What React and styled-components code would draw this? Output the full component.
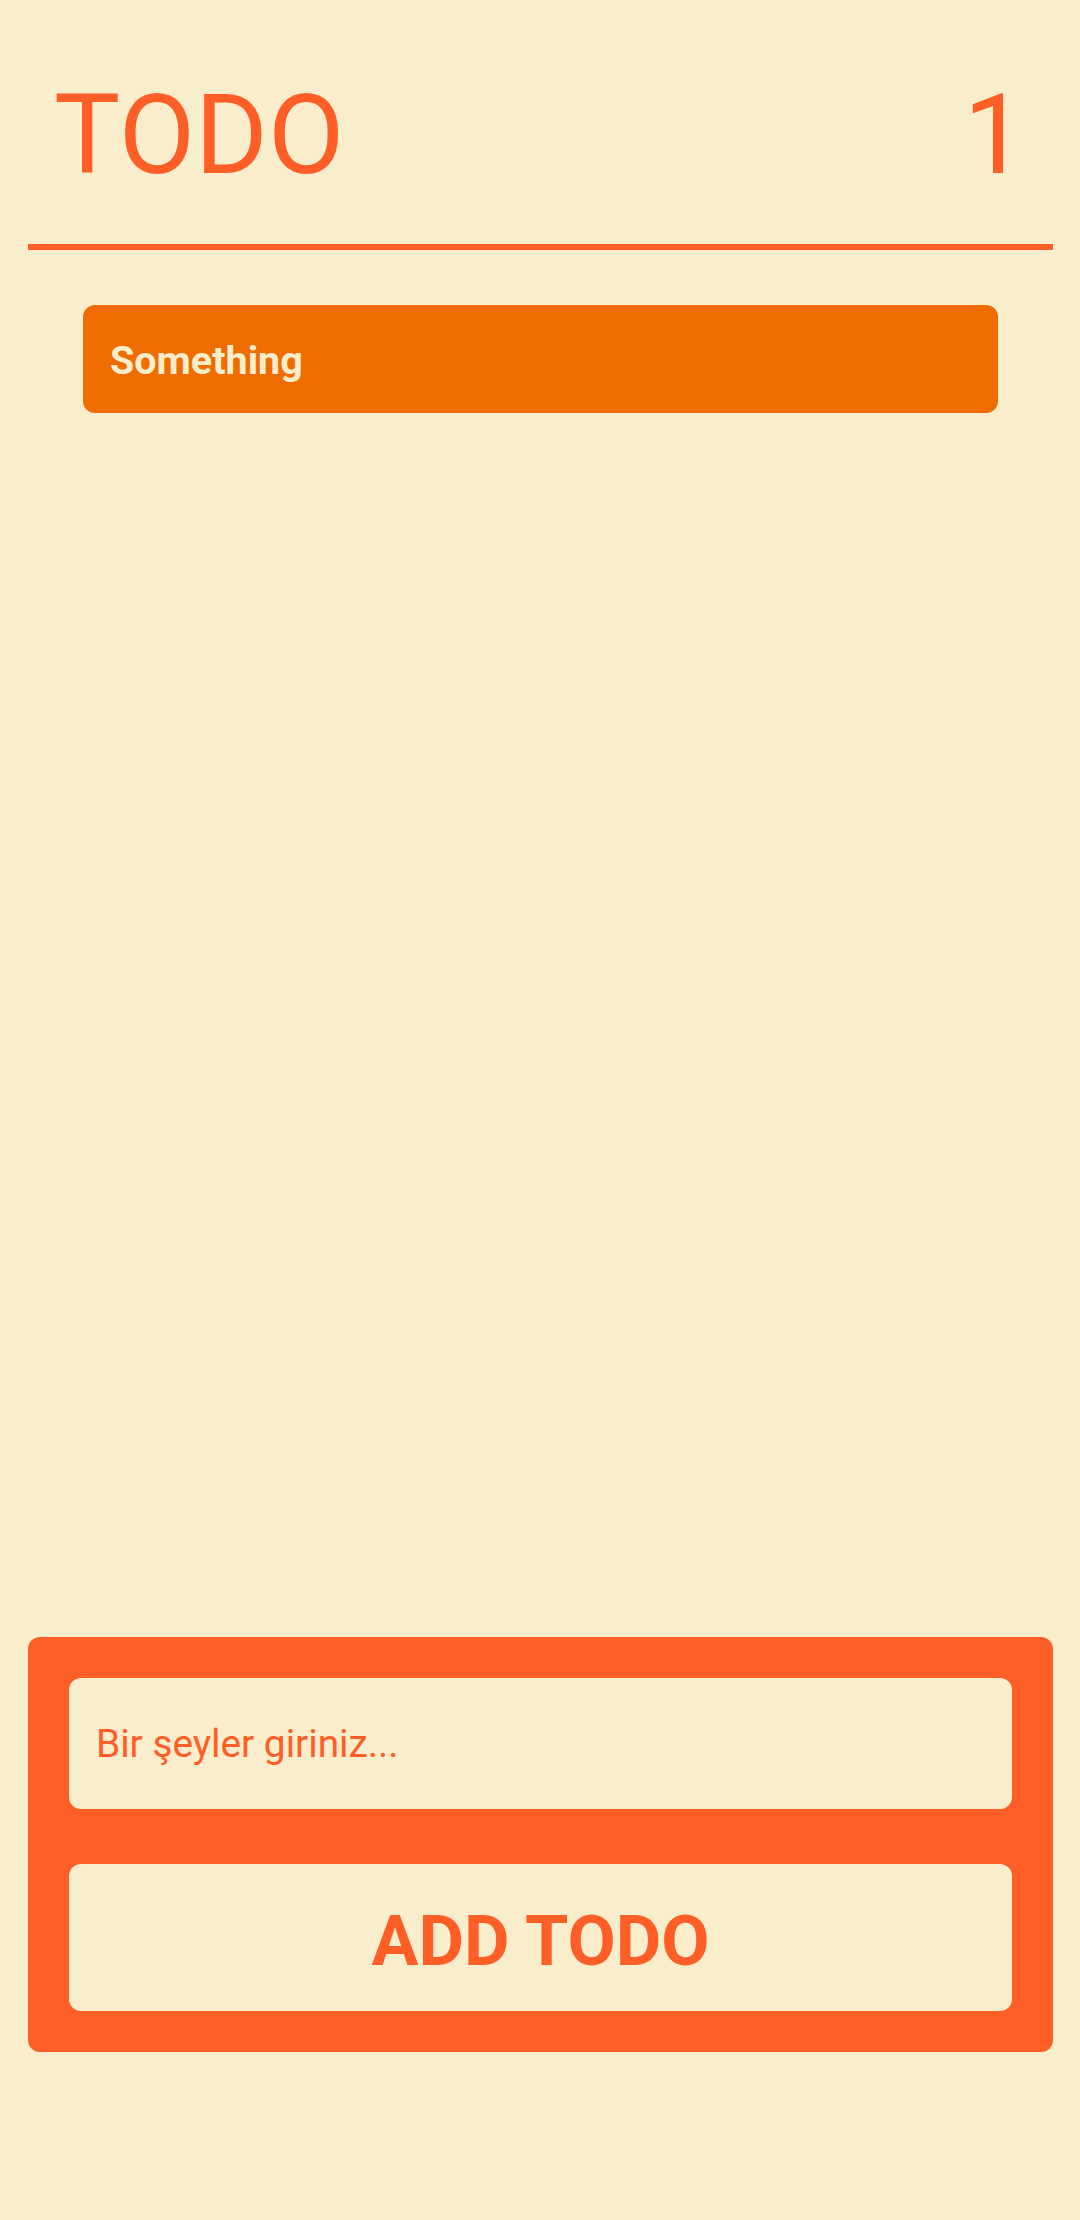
import React from "react";
import styled, { createGlobalStyle } from "styled-components";

const ACCENT = "#FF5E27";
const ITEM = "#EF6C00";
const CREAM = "#FAEDCB";

const Global = createGlobalStyle`
  html, body { margin: 0; padding: 0; background: ${CREAM}; }
  * { box-sizing: border-box; }
  body { font-family: Roboto, "Noto Sans", sans-serif; }
`;

const Page = styled.div`
  min-height: 2220px;
  display: flex;
  flex-direction: column;
  padding: 0 27px 0 28px;
  background: ${CREAM};
`;

const Header = styled.header`
  display: flex;
  justify-content: space-between;
  align-items: flex-start;
  padding: 70px 27px 44px 26px;
  border-bottom: 6px solid ${ACCENT};
`;

const Title = styled.h1`
  margin: 0;
  font-family: Roboto, sans-serif;
  font-weight: 400;
  font-size: 111px;
  line-height: normal;
  color: ${ACCENT};
`;

const List = styled.ul`
  list-style: none;
  margin: 0;
  padding: 55px 55px 0 55px;
  display: flex;
  flex-direction: column;
  gap: 20px;
`;

const Item = styled.li`
  height: 108px;
  border-radius: 12px;
  background: ${ITEM};
  display: flex;
  align-items: center;
  padding: 2px 0 0 27px;
  font-family: Roboto, sans-serif;
  font-weight: 700;
  font-size: 39.5px;
  color: ${CREAM};
`;

const Spacer = styled.div`
  flex: 1;
`;

const Panel = styled.form`
  margin-bottom: 168px;
  padding: 41px;
  border-radius: 12px;
  background: ${ACCENT};
  display: flex;
  flex-direction: column;
  gap: 55px;
`;

const Input = styled.input`
  height: 131px;
  border: none;
  outline: none;
  border-radius: 12px;
  background: ${CREAM};
  padding: 0 27px;
  font-family: Roboto, sans-serif;
  font-size: 38.8px;
  color: ${ACCENT};
  &::placeholder { color: ${ACCENT}; opacity: 1; }
`;

const Button = styled.button`
  height: 147px;
  border: none;
  border-radius: 12px;
  background: ${CREAM};
  padding: 6px 0 0;
  font-family: Roboto, sans-serif;
  font-weight: 700;
  font-size: 70px;
  color: ${ACCENT};
  cursor: pointer;
`;

export default function App() {
  const todos = ["Something"];
  return (
    <>
      <Global />
      <Page>
        <Header>
          <Title>TODO</Title>
          <Title>{todos.length}</Title>
        </Header>
        <List>
          {todos.map((t) => (
            <Item key={t}>{t}</Item>
          ))}
        </List>
        <Spacer />
        <Panel onSubmit={(e) => e.preventDefault()}>
          <Input placeholder="Bir şeyler giriniz..." />
          <Button type="submit">ADD TODO</Button>
        </Panel>
      </Page>
    </>
  );
}
